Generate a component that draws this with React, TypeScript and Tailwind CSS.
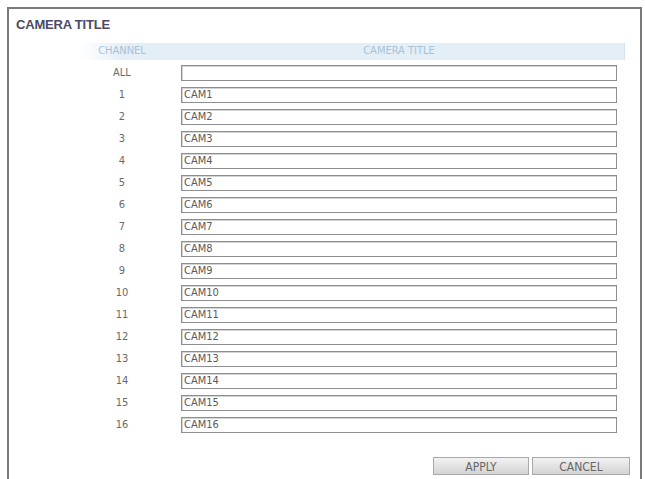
import React from 'react';

// 채널별 카메라 이름 (ALL 행은 비어 있음)
const CHANNELS = Array.from({ length: 16 }, (_, i) => ({
  ch: String(i + 1),
  title: `CAM${i + 1}`,
}));

const FONT = { fontFamily: '"Liberation Sans", Arial, sans-serif' };
const NARROW = { fontFamily: '"Liberation Sans Narrow", "DejaVu Sans Condensed", "Liberation Sans", sans-serif' };

function TitleRow({ ch, title }: { ch: string; title: string }) {
  return (
    <div className="flex h-[22px] items-center" style={NARROW}>
      <div className="w-[84px] text-center text-[11px] text-[#6a6a6a]">{ch}</div>
      <div className="ml-[17px] flex h-[16px] w-[436px] items-center border border-[#8e8e8e] bg-white pl-[2px] text-[11px] text-[#5a5a5a] shadow-[inset_1px_1px_0_#d4d4d4]">
        {title}
      </div>
    </div>
  );
}

export default function App() {
  return (
    <div className="h-[479px] w-[645px] overflow-hidden bg-white pl-[7px] pt-[7px]" style={FONT}>
      <div className="h-[480px] w-[635px] border-2 border-b-0 border-[#7a7a7a]">
        {/* 화면 제목 */}
        <div className="pl-[7px] pt-[9px] text-[13px] leading-[14px] font-bold tracking-[-0.2px] text-[#4a4a68]">
          CAMERA TITLE
        </div>

        {/* 테이블 헤더 */}
        <div
          className="ml-[71px] mt-[11px] flex h-[17px] w-[545px] items-center border-r border-[#d6e3ee] bg-gradient-to-r from-white from-0% via-[#e4eef7] via-8% to-[#e4eef7] text-[11px] text-[#a6c3d8]"
          style={NARROW}
        >
          <div className="w-[84px] text-center">CHANNEL</div>
          <div className="ml-[17px] w-[436px] text-center">CAMERA TITLE</div>
        </div>

        {/* 채널 목록 */}
        <div className="mt-[2px] ml-[71px]">
          <TitleRow ch="ALL" title="" />
          {CHANNELS.map((c) => (
            <TitleRow key={c.ch} ch={c.ch} title={c.title} />
          ))}
        </div>

        {/* 하단 버튼 */}
        <div className="mt-[21px] flex justify-end gap-[3px] pr-[10px]" style={NARROW}>
          <button className="h-[18px] w-[96px] border border-[#a9a9a9] bg-gradient-to-b from-[#f2f2f2] to-[#d4d4d4] text-[12px] text-[#666]">
            APPLY
          </button>
          <button className="h-[18px] w-[98px] border border-[#a9a9a9] bg-gradient-to-b from-[#f2f2f2] to-[#d4d4d4] text-[12px] text-[#666]">
            CANCEL
          </button>
        </div>
      </div>
    </div>
  );
}
